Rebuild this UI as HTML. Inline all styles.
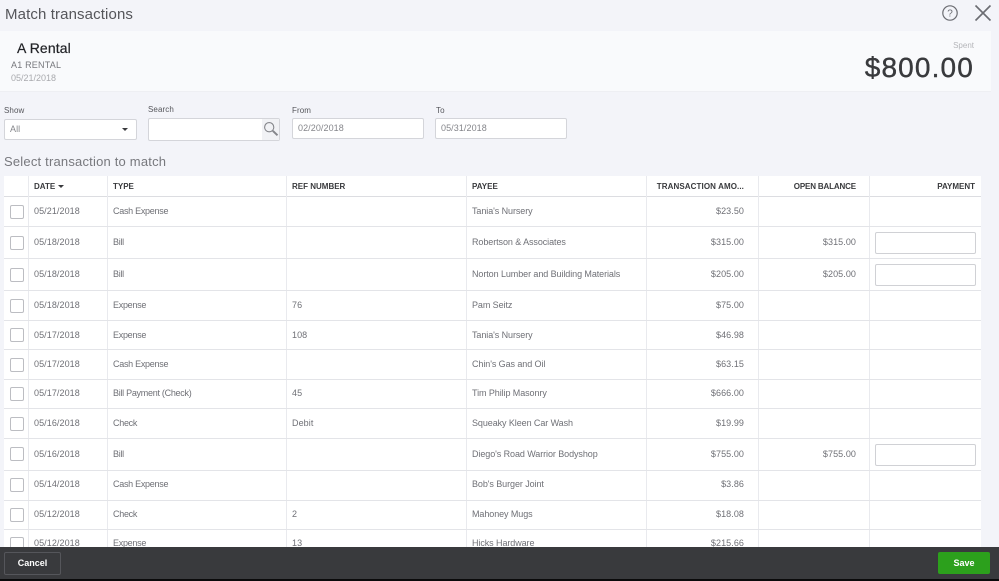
<!DOCTYPE html>
<html>
<head>
<meta charset="utf-8">
<style>
html,body{margin:0;padding:0;width:999px;height:581px;overflow:hidden;background:#f3f4f9}
body{position:relative;font-family:"Liberation Sans",sans-serif;color:#6b6c72;filter:blur(.3px)}
div,span{position:absolute;white-space:nowrap}
.tx{font-size:9px;line-height:12px;color:#6f7076;letter-spacing:.08px}
.ty{letter-spacing:-.28px}
.py{letter-spacing:-.08px}
.h{font-size:8px;line-height:12px;font-weight:bold;color:#393a3d;top:181px}
.hl{height:1px;left:4px;width:977px;background:#e3e4e8}
.vl{width:1px;top:176px;height:371px;background:#e9eaee}
.cb{left:10px;width:12px;height:12px;border:1px solid #bcbdc2;border-radius:2px;background:#fff}
.pay{left:875px;width:99px;height:20px;border:1px solid #d0d1d5;border-radius:2px;background:#fff}
.lb{font-size:8px;line-height:10px;color:#55565b;letter-spacing:.1px}
.inp{height:19px;background:#fff;border:1px solid #d4d5da;border-radius:2px;font-size:9px;line-height:19px;color:#85868b;letter-spacing:.08px}
.a{right:255px}.o{right:143px}
</style>
</head>
<body>
<div style="left:5px;top:5px;font-size:15px;line-height:19px;color:#55565b;letter-spacing:.12px">Match transactions</div>

<svg style="position:absolute;left:941px;top:4px" width="18" height="18" viewBox="0 0 18 18"><circle cx="9" cy="9" r="7.2" fill="none" stroke="#6b6c72" stroke-width="1.2"/><text x="9" y="12.5" text-anchor="middle" font-size="10" font-family="Liberation Sans" fill="#6b6c72">?</text></svg>
<svg style="position:absolute;left:974px;top:4px" width="18" height="18" viewBox="0 0 18 18"><path d="M1.5 1.5L16.5 16.5M16.5 1.5L1.5 16.5" stroke="#6b6c72" stroke-width="1.6" fill="none"/></svg>

<div style="left:0;top:31px;width:991px;height:60px;background:#f9fafc;border-bottom:1px solid #eeeff3"></div>
<div style="left:17px;top:40px;font-size:14px;line-height:17px;color:#222327;letter-spacing:.12px;-webkit-text-stroke:.2px #222327">A Rental</div>
<div style="left:11px;top:60px;font-size:9px;line-height:11px;color:#77787d;letter-spacing:.2px">A1 RENTAL</div>
<div style="left:11px;top:73px;font-size:9px;line-height:11px;color:#a9aaae">05/21/2018</div>
<div style="right:25px;top:41px;font-size:8px;line-height:10px;color:#b4b5b9">Spent</div>
<div style="right:25px;top:51px;font-size:28px;line-height:33px;color:#393a3d;letter-spacing:1.15px;-webkit-text-stroke:.4px #393a3d">$800.00</div>

<div class="lb" style="left:4px;top:106px">Show</div>
<div class="inp" style="left:4px;top:119px;width:126px;padding-left:5px">All</div>
<div style="left:122px;top:128px;width:0;height:0;border-left:3px solid transparent;border-right:3px solid transparent;border-top:3px solid #393a3d"></div>

<div class="lb" style="left:148px;top:105px">Search</div>
<div class="inp" style="left:148px;top:118px;width:130px;height:21px"></div>
<div style="left:262px;top:119px;width:17px;height:21px;background:#f1f2f5"></div>
<svg style="position:absolute;left:263px;top:121px" width="16" height="16" viewBox="0 0 16 16"><circle cx="6.2" cy="6.2" r="4.6" fill="none" stroke="#85868b" stroke-width="1.1"/><path d="M9.8 9.8L14.5 14.3" stroke="#85868b" stroke-width="2" fill="none"/></svg>

<div class="lb" style="left:292px;top:106px">From</div>
<div class="inp" style="left:292px;top:118px;width:125px;padding-left:5px">02/20/2018</div>
<div class="lb" style="left:436px;top:106px">To</div>
<div class="inp" style="left:435px;top:118px;width:125px;padding-left:5px">05/31/2018</div>

<div style="left:4px;top:154px;font-size:13px;line-height:16px;color:#77787d;letter-spacing:.2px">Select transaction to match</div>

<div style="left:4px;top:176px;width:977px;height:371px;background:#fff"></div>
<div class="hl" style="top:196px;background:#dcdde1"></div>
<div class="vl" style="left:28px"></div><div class="vl" style="left:107px"></div><div class="vl" style="left:286px"></div><div class="vl" style="left:466px"></div><div class="vl" style="left:646px"></div><div class="vl" style="left:758px"></div><div class="vl" style="left:869px"></div>

<div class="h" style="left:34px">DATE</div>
<div style="left:58px;top:185px;width:0;height:0;border-left:3px solid transparent;border-right:3px solid transparent;border-top:3px solid #393a3d"></div>
<div class="h" style="left:113px">TYPE</div>
<div class="h" style="left:292px">REF NUMBER</div>
<div class="h" style="left:472px">PAYEE</div>
<div class="h a" style="letter-spacing:.1px">TRANSACTION AMO...</div>
<div class="h o" style="letter-spacing:-.15px">OPEN BALANCE</div>
<div class="h" style="right:24px">PAYMENT</div>

<div class="hl" style="top:226px"></div><div class="hl" style="top:258px"></div><div class="hl" style="top:290px"></div><div class="hl" style="top:320px"></div><div class="hl" style="top:349px"></div><div class="hl" style="top:379px"></div><div class="hl" style="top:408px"></div><div class="hl" style="top:438px"></div><div class="hl" style="top:470px"></div><div class="hl" style="top:500px"></div><div class="hl" style="top:529px"></div>

<div class="cb" style="top:205px"></div><div class="tx" style="left:34px;top:205px">05/21/2018</div><div class="tx ty" style="left:113px;top:205px">Cash Expense</div><div class="tx py" style="left:472px;top:205px">Tania's Nursery</div><div class="tx a" style="top:205px">$23.50</div>

<div class="cb" style="top:236px"></div><div class="tx" style="left:34px;top:236px">05/18/2018</div><div class="tx ty" style="left:113px;top:236px">Bill</div><div class="tx py" style="left:472px;top:236px">Robertson &amp; Associates</div><div class="tx a" style="top:236px">$315.00</div><div class="tx o" style="top:236px">$315.00</div><div class="pay" style="top:232px"></div>

<div class="cb" style="top:268px"></div><div class="tx" style="left:34px;top:268px">05/18/2018</div><div class="tx ty" style="left:113px;top:268px">Bill</div><div class="tx py" style="left:472px;top:268px">Norton Lumber and Building Materials</div><div class="tx a" style="top:268px">$205.00</div><div class="tx o" style="top:268px">$205.00</div><div class="pay" style="top:264px"></div>

<div class="cb" style="top:299px"></div><div class="tx" style="left:34px;top:299px">05/18/2018</div><div class="tx ty" style="left:113px;top:299px">Expense</div><div class="tx" style="left:292px;top:299px">76</div><div class="tx py" style="left:472px;top:299px">Pam Seitz</div><div class="tx a" style="top:299px">$75.00</div>

<div class="cb" style="top:328px"></div><div class="tx" style="left:34px;top:329px">05/17/2018</div><div class="tx ty" style="left:113px;top:329px">Expense</div><div class="tx" style="left:292px;top:329px">108</div><div class="tx py" style="left:472px;top:329px">Tania's Nursery</div><div class="tx a" style="top:329px">$46.98</div>

<div class="cb" style="top:358px"></div><div class="tx" style="left:34px;top:358px">05/17/2018</div><div class="tx ty" style="left:113px;top:358px">Cash Expense</div><div class="tx py" style="left:472px;top:358px">Chin's Gas and Oil</div><div class="tx a" style="top:358px">$63.15</div>

<div class="cb" style="top:387px"></div><div class="tx" style="left:34px;top:387px">05/17/2018</div><div class="tx ty" style="left:113px;top:387px">Bill Payment (Check)</div><div class="tx" style="left:292px;top:387px">45</div><div class="tx py" style="left:472px;top:387px">Tim Philip Masonry</div><div class="tx a" style="top:387px">$666.00</div>

<div class="cb" style="top:417px"></div><div class="tx" style="left:34px;top:417px">05/16/2018</div><div class="tx ty" style="left:113px;top:417px">Check</div><div class="tx" style="left:292px;top:417px">Debit</div><div class="tx py" style="left:472px;top:417px">Squeaky Kleen Car Wash</div><div class="tx a" style="top:417px">$19.99</div>

<div class="cb" style="top:447px"></div><div class="tx" style="left:34px;top:448px">05/16/2018</div><div class="tx ty" style="left:113px;top:448px">Bill</div><div class="tx py" style="left:472px;top:448px">Diego's Road Warrior Bodyshop</div><div class="tx a" style="top:448px">$755.00</div><div class="tx o" style="top:448px">$755.00</div><div class="pay" style="top:444px"></div>

<div class="cb" style="top:478px"></div><div class="tx" style="left:34px;top:478px">05/14/2018</div><div class="tx ty" style="left:113px;top:478px">Cash Expense</div><div class="tx py" style="left:472px;top:478px">Bob's Burger Joint</div><div class="tx a" style="top:478px">$3.86</div>

<div class="cb" style="top:508px"></div><div class="tx" style="left:34px;top:508px">05/12/2018</div><div class="tx ty" style="left:113px;top:508px">Check</div><div class="tx" style="left:292px;top:508px">2</div><div class="tx py" style="left:472px;top:508px">Mahoney Mugs</div><div class="tx a" style="top:508px">$18.08</div>

<div class="cb" style="top:537px"></div><div class="tx" style="left:34px;top:537px">05/12/2018</div><div class="tx ty" style="left:113px;top:537px">Expense</div><div class="tx" style="left:292px;top:537px">13</div><div class="tx py" style="left:472px;top:537px">Hicks Hardware</div><div class="tx a" style="top:537px">$215.66</div>

<div style="left:0;top:547px;width:999px;height:32px;background:#393a3d"></div>
<div style="left:0;top:579px;width:999px;height:2px;background:#0a0a0b"></div>
<div style="left:4px;top:552px;width:55px;height:21px;border:1px solid #55565b;border-radius:2px;text-align:center;font-size:9px;font-weight:bold;line-height:21px;color:#fff">Cancel</div>
<div style="left:938px;top:552px;width:52px;height:22px;background:#2ca01c;border-radius:2px;text-align:center;font-size:9px;font-weight:bold;line-height:23px;color:#fff">Save</div>
</body>
</html>
